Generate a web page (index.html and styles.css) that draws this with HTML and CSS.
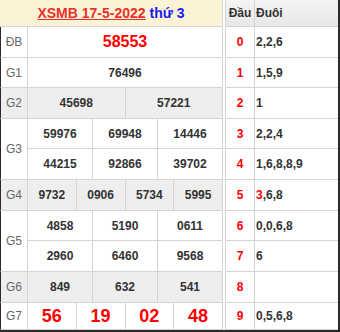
FILE: index.html
```html
<!DOCTYPE html>
<html>
<head>
<meta charset="utf-8">
<link rel="stylesheet" href="styles.css">
</head>
<body>
<div class="page">
  <div class="kq">
    <div class="kq-head"><a class="kq-link">XSMB 17-5-2022</a><span class="kq-day">thứ 3</span></div>

    <div class="lbl r2">ĐB</div>
    <div class="nums r2 cols1"><span class="c db">58553</span></div>

    <div class="lbl r3">G1</div>
    <div class="nums r3 cols1"><span class="c">76496</span></div>

    <div class="lbl r4 alt">G2</div>
    <div class="nums r4 cols2 alt"><span class="c">45698</span><span class="c">57221</span></div>

    <div class="lbl r5 span2">G3</div>
    <div class="nums r5 span2 cols3 two">
      <span class="c">59976</span><span class="c">69948</span><span class="c">14446</span>
      <span class="c">44215</span><span class="c">92866</span><span class="c">39702</span>
    </div>

    <div class="lbl r7 alt">G4</div>
    <div class="nums r7 cols4 alt"><span class="c">9732</span><span class="c">0906</span><span class="c">5734</span><span class="c">5995</span></div>

    <div class="lbl r8 span2">G5</div>
    <div class="nums r8 span2 cols3 two">
      <span class="c">4858</span><span class="c">5190</span><span class="c">0611</span>
      <span class="c">2960</span><span class="c">6460</span><span class="c">9568</span>
    </div>

    <div class="lbl r10 alt">G6</div>
    <div class="nums r10 cols3 alt"><span class="c">849</span><span class="c">632</span><span class="c">541</span></div>

    <div class="lbl r11">G7</div>
    <div class="nums r11 cols4"><span class="c g7">56</span><span class="c g7">19</span><span class="c g7">02</span><span class="c g7">48</span></div>
  </div>

  <div class="lt">
    <div class="lt-h lt-dau">Đầu</div><div class="lt-h lt-duoi">Đuôi</div>
    <div class="dau">0</div><div class="duoi">2,2,6</div>
    <div class="dau">1</div><div class="duoi">1,5,9</div>
    <div class="dau">2</div><div class="duoi">1</div>
    <div class="dau">3</div><div class="duoi">2,2,4</div>
    <div class="dau">4</div><div class="duoi">1,6,8,8,9</div>
    <div class="dau">5</div><div class="duoi"><span class="hot">3</span>,6,8</div>
    <div class="dau">6</div><div class="duoi">0,0,6,8</div>
    <div class="dau">7</div><div class="duoi">6</div>
    <div class="dau">8</div><div class="duoi"></div>
    <div class="dau">9</div><div class="duoi">0,5,6,8</div>
  </div>
</div>
</body>
</html>
```

FILE: styles.css
```css
* { box-sizing: border-box; }
html, body { margin: 0; padding: 0; background: #fff; }
body {
  width: 340px;
  height: 332px;
  overflow: hidden;
  font-family: "Liberation Sans", Arial, sans-serif;
  color: #333;
}
.page {
  display: flex;
  gap: 2px;
  width: 340px;
  height: 332px;
  border-right: 2px solid #2b2b2b;
  border-bottom: 2px solid #2b2b2b;
}
.kq, .lt {
  display: grid;
  grid-template-rows: 27px 31px 30px 31px 30px 31px 31px 30px 31px 31px 1fr;
  height: 100%;
}
.kq {
  width: 223px;
  grid-template-columns: 28px 1fr;
}
.kq-head {
  grid-column: 1 / -1;
  grid-row: 1;
  background: #fcf3d6;
  border-right: 1px solid #d4d4d4;
  border-bottom: 1px solid #d4d4d4;
  display: flex;
  align-items: center;
  justify-content: center;
  gap: 4px;
  font-size: 14px;
  font-weight: bold;
  white-space: nowrap;
}
.kq-link { color: #e8302b; text-decoration: underline; }
.kq-day { color: #1a1af0; }

.lbl {
  grid-column: 1;
  border-left: 1px solid #2b2b2b;
  border-right: 1px solid #d4d4d4;
  border-bottom: 1px solid #d4d4d4;
  display: flex;
  align-items: center;
  justify-content: center;
  font-size: 12px;
  color: #666;
}
.nums {
  grid-column: 2;
  display: grid;
}
.r2 { grid-row: 2; }
.r3 { grid-row: 3; }
.r4 { grid-row: 4; }
.r5 { grid-row: 5 / span 2; }
.r7 { grid-row: 7; }
.r8 { grid-row: 8 / span 2; }
.r10 { grid-row: 10; }
.r11 { grid-row: 11; }
.alt { background: #eeeeee; }
.cols1 { grid-template-columns: 1fr; }
.cols2 { grid-template-columns: 1fr 1fr; }
.cols3 { grid-template-columns: 1fr 1fr 1fr; }
.cols4 { grid-template-columns: 1fr 1fr 1fr 1fr; }
.two { grid-template-rows: 30px 1fr; }
.c {
  display: flex;
  align-items: center;
  justify-content: center;
  border-right: 1px solid #d4d4d4;
  border-bottom: 1px solid #d4d4d4;
  font-size: 12px;
  font-weight: bold;
  color: #333;
}
.db { font-size: 16px; color: #f00; }
.g7 { font-size: 18px; color: #f00; }

.lt {
  width: 113px;
  grid-template-columns: 30px 1fr;
}
.lt-h {
  background: linear-gradient(#f5f5f5, #e7e7e7);
  border-bottom: 1px solid #d4d4d4;
  display: flex;
  align-items: center;
  font-size: 12px;
  font-weight: bold;
  color: #333;
}
.lt-dau {
  border-left: 1px solid #d4d4d4;
  border-right: 1px solid #d4d4d4;
  justify-content: center;
}
.lt-duoi { padding-left: 1px; }
.dau {
  border-left: 1px solid #d4d4d4;
  border-right: 1px solid #d4d4d4;
  border-bottom: 1px solid #d4d4d4;
  display: flex;
  align-items: center;
  justify-content: center;
  font-size: 12px;
  font-weight: bold;
  color: #f00;
}
.duoi {
  border-bottom: 1px solid #d4d4d4;
  display: flex;
  align-items: center;
  padding-left: 1px;
  font-size: 12px;
  font-weight: bold;
  color: #333;
}
.hot { color: #f00; }
```
